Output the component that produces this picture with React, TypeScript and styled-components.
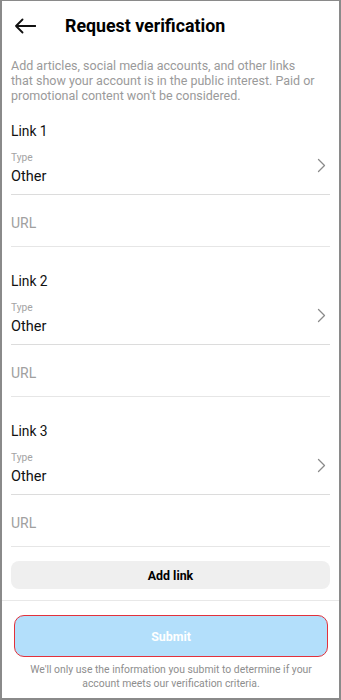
import React from "react";
import styled, { createGlobalStyle } from "styled-components";

const Global = createGlobalStyle`
  html, body { margin: 0; padding: 0; background: #fff; }
  * { box-sizing: border-box; }
  body { font-family: Roboto, "Liberation Sans", Arial, sans-serif; }
`;

const Frame = styled.div`
  width: 341px;
  height: 700px;
  border: 1px solid #8a8a8a;
  border-left-width: 2px;
  border-right-width: 2px;
  border-bottom-width: 2px;
  display: flex;
  flex-direction: column;
  overflow: hidden;
  background: #fff;
`;

const Header = styled.div`
  height: 49px;
  display: flex;
  align-items: center;
  padding-left: 12px;
  gap: 29px;
`;

const BackButton = styled.div`
  width: 22px;
  height: 16px;
  display: flex;
  align-items: center;
`;

const Title = styled.h1`
  margin: 0;
  font-size: 17.8px;
  font-weight: 700;
  color: #000;
  letter-spacing: 0;
`;

const Body = styled.div`
  padding: 0 9px;
  display: flex;
  flex-direction: column;
`;

const Description = styled.p`
  margin: 8px 0 0 0;
  font-size: 12.5px;
  line-height: 15px;
  color: #9a9a9a;
  white-space: nowrap;
`;

const Section = styled.div<{ $first?: boolean }>`
  margin-top: ${(p) => (p.$first ? "19px" : "25px")};
  display: flex;
  flex-direction: column;
`;

const SectionLabel = styled.div`
  font-size: 13.8px;
  line-height: 18px;
  color: #111;
`;

const TypeField = styled.div`
  margin-top: 11px;
  padding-bottom: 7px;
  border-bottom: 1px solid #dcdcdc;
  display: flex;
  align-items: center;
  justify-content: space-between;
`;

const FieldText = styled.div`
  display: flex;
  flex-direction: column;
`;

const SmallLabel = styled.div`
  font-size: 10.2px;
  line-height: 14px;
  color: #a3a3a3;
`;

const Value = styled.div`
  margin-top: 2px;
  font-size: 14.5px;
  line-height: 20px;
  color: #111;
`;

const UrlField = styled.div`
  padding: 18px 0 13px;
  border-bottom: 1px solid #e6e6e6;
  font-size: 14px;
  line-height: 20px;
  color: #a0a0a0;
`;

const Chevron = styled.svg`
  margin-right: 4px;
  margin-top: -8px;
`;

const AddLink = styled.button`
  margin-top: 14px;
  height: 28px;
  width: 100%;
  border: none;
  border-radius: 8px;
  background: #efefef;
  font-family: Roboto, "Liberation Sans", Arial, sans-serif;
  font-size: 12.4px;
  font-weight: 700;
  color: #000;
  padding: 0;
`;

const Footer = styled.div`
  margin-top: 11px;
  border-top: 1px solid #e8e8e8;
  padding: 14px 11px 0 12px;
  display: flex;
  flex-direction: column;
  align-items: center;
`;

const Submit = styled.button`
  width: 100%;
  height: 42px;
  border: 1.5px solid #e2323c;
  border-radius: 10px;
  background: #b3dffb;
  color: #fff;
  font-family: Roboto, "Liberation Sans", Arial, sans-serif;
  font-size: 12.4px;
  font-weight: 700;
  padding: 0;
`;

const Note = styled.p`
  margin: 6px 0 0;
  text-align: center;
  font-size: 10.4px;
  line-height: 14px;
  color: #8e8e8e;
`;

const ArrowIcon = () => (
  <svg width="22" height="16" viewBox="0 0 22 16" fill="none">
    <path d="M8.5 1.5 L2 8 L8.5 14.5 M2 8 H21.5" stroke="#111" strokeWidth="1.8" strokeLinecap="round" strokeLinejoin="round" />
  </svg>
);

const LinkSection = ({ n, first }: { n: number; first?: boolean }) => (
  <Section $first={first}>
    <SectionLabel>Link {n}</SectionLabel>
    <TypeField>
      <FieldText>
        <SmallLabel>Type</SmallLabel>
        <Value>Other</Value>
      </FieldText>
      <Chevron width="9" height="15" viewBox="0 0 9 15" fill="none">
        <path d="M1.5 1.5 L7.5 7.5 L1.5 13.5" stroke="#8a8a8a" strokeWidth="1.3" strokeLinecap="round" strokeLinejoin="round" />
      </Chevron>
    </TypeField>
    <UrlField>URL</UrlField>
  </Section>
);

export default function App() {
  return (
    <>
      <Global />
      <Frame>
        <Header>
          <BackButton>
            <ArrowIcon />
          </BackButton>
          <Title>Request verification</Title>
        </Header>
        <Body>
          <Description>
            Add articles, social media accounts, and other links
            <br />
            that show your account is in the public interest. Paid or
            <br />
            promotional content won't be considered.
          </Description>
          <LinkSection n={1} first />
          <LinkSection n={2} />
          <LinkSection n={3} />
          <AddLink>Add link</AddLink>
        </Body>
        <Footer>
          <Submit>Submit</Submit>
          <Note>
            We'll only use the information you submit to determine if your account meets our verification criteria.
          </Note>
        </Footer>
      </Frame>
    </>
  );
}
